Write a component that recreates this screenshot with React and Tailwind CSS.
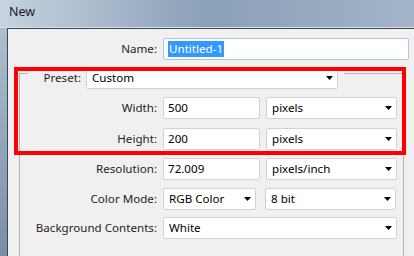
import React from 'react';

function Arrow() {
    return (
        <svg width="7" height="4" viewBox="0 0 7 4" className="shrink-0">
            <polygon points="0,0 7,0 3.5,4" fill="#000" />
        </svg>
    );
}

function Field({ value, className = '' }) {
    return (
        <div className={`h-[22px] flex items-center bg-white border border-[#d2d2d2] rounded-[2px] pl-[4px] text-[#000] ${className}`}>
            {value}
        </div>
    );
}

function Select({ value, className = '' }) {
    return (
        <div className={`h-[22px] flex items-center justify-between bg-white border border-[#d2d2d2] rounded-[2px] pl-[5px] pr-[4px] text-[#000] ${className}`}>
            <span>{value}</span>
            <Arrow />
        </div>
    );
}

function Row({ label, children, top = 'mt-[8px]' }) {
    return (
        <div className={`flex items-center ${top}`}>
            <div className="w-[137px] text-right text-[#1e1e1e]">{label}</div>
            <div className="flex items-center gap-[6px] ml-[6px]">{children}</div>
        </div>
    );
}

export default function App() {
    return (
        <div className="relative w-[414px] h-[256px] overflow-hidden flex flex-col bg-gradient-to-b from-[#b4c4d4] to-[#7a8ea6] font-['Noto_Sans',sans-serif] text-[11.6px] leading-none">
            {/* title bar */}
            <div className="h-[28px] shrink-0 flex items-center pl-[9px] pb-[2px] text-[12.5px] text-[#1a1a1a] bg-gradient-to-r from-[#c6d3e0] via-[#8aa0b7] to-[#a2b5c8] border-b border-[#d9e1e9]">
                New
            </div>

            {/* client area */}
            <div className="flex-1 ml-[7px] border-l border-t border-[#3e4853] bg-[#f0f0f0] flex flex-col">
                <div className="flex items-center mt-[9px]">
                    <div className="w-[149px] text-right text-[#1e1e1e]">Name:</div>
                    <div className="ml-[6px] w-[246px] h-[22px] flex items-center bg-white border border-[#a9c8e4] rounded-[2px] pl-[4px] shrink-0">
                        <span className="bg-[#3399ff] text-white px-[1px] py-[2px]">Untitled-1</span>
                    </div>
                </div>

                {/* group box */}
                <div className="mt-[13px] ml-[11px] w-[385px] flex-1 border-l border-t border-r border-[#b4b4b4] flex flex-col">
                    <div className="-mt-[7px] ml-[8px] w-[316px] pr-[6px] flex items-center justify-end bg-[#f0f0f0]">
                        <span className="mr-[5px] text-[#1e1e1e]">Preset:</span>
                        <Select value="Custom" className="w-[252px]" />
                    </div>

                    <Row label="Width:">
                        <Field value="500" className="w-[97px]" />
                        <Select value="pixels" className="w-[131px]" />
                    </Row>
                    <Row label="Height:" top="mt-[9px]">
                        <Field value="200" className="w-[97px]" />
                        <Select value="pixels" className="w-[131px]" />
                    </Row>
                    <Row label="Resolution:">
                        <Field value="72.009" className="w-[97px]" />
                        <Select value="pixels/inch" className="w-[131px]" />
                    </Row>
                    <Row label="Color Mode:">
                        <Select value="RGB Color" className="w-[93px]" />
                        <Select value="8 bit" className="w-[131px] ml-[3px]" />
                    </Row>
                    <Row label="Background Contents:" top="mt-[7px]">
                        <Select value="White" className="w-[234px]" />
                    </Row>
                </div>
            </div>

            {/* red annotation */}
            <div className="absolute left-[14px] top-[67px] w-[392px] h-[88px] border-4 border-[#ff0000] pointer-events-none" />
        </div>
    );
}
